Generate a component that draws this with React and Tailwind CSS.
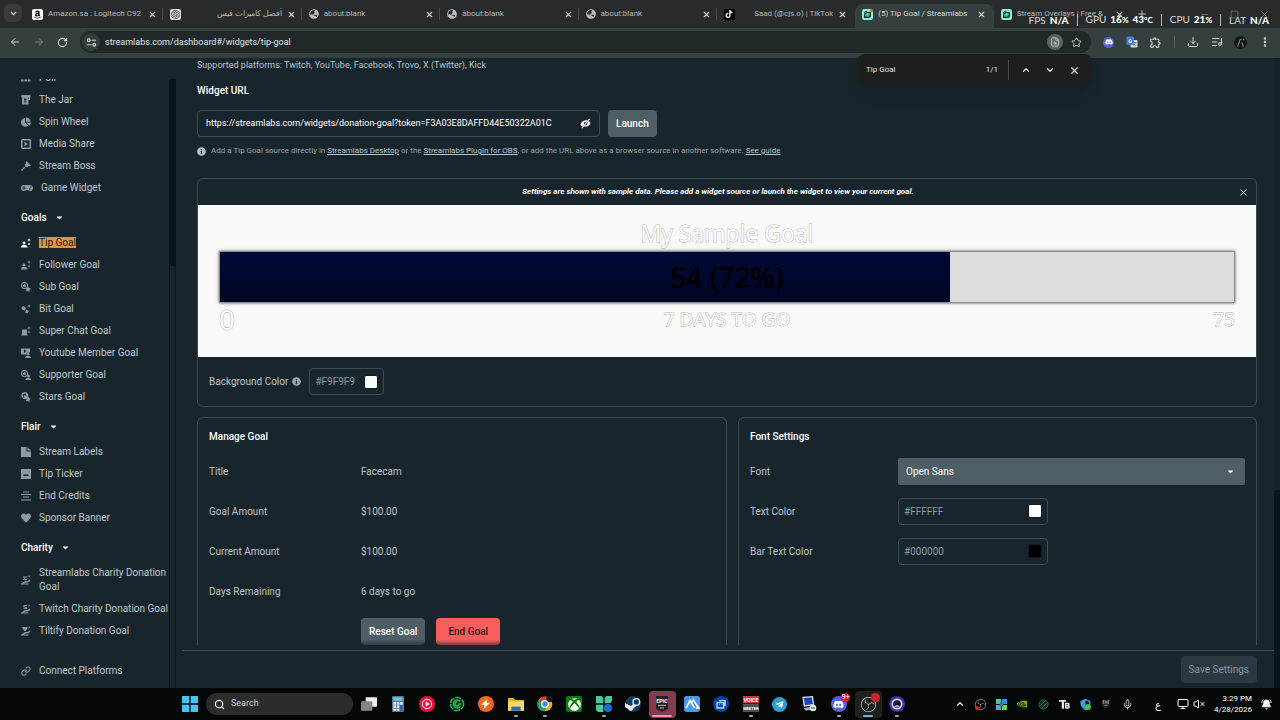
import React, { useState } from 'react';
import {
  ArrowLeft, ArrowRight, RotateCw, ChevronDown, ChevronUp, X, Plus, Minus, Square, Star,
  Download, ListMusic, EllipsisVertical, Search, Link, Mic, VolumeX, BellRing, FileSearch, Monitor
} from 'lucide-react';
import {
  FaAmazon, FaXbox, FaDiscord, FaTiktok, FaGlobeAsia, FaChartPie, FaHeart,
  FaGamepad, FaInfoCircle, FaTelegramPlane, FaCaretDown, FaShieldAlt
} from 'react-icons/fa';
import { MdOutlineExtension } from 'react-icons/md';
import { SiOpenai, SiObsstudio, SiNvidia } from 'react-icons/si';

const StreamlabsLogo = () => (
  <svg viewBox="0 0 24 24" className="size-[11px] shrink-0" aria-hidden="true">
    <rect width="24" height="24" rx="5" fill="#80f5d2" />
    <path d="M6 13a5 5 0 0 1 5-5h7v6a4 4 0 0 1-4 4H6z" fill="none" stroke="#15292b" strokeWidth="3" />
    <path d="M11 13v1M15 13v1M5 8c1-2 3-3 6-3" stroke="#15292b" strokeWidth="2" strokeLinecap="round" fill="none" />
  </svg>
);

const Globe = () => <FaGlobeAsia className="size-[10px] shrink-0 text-[#b9bdbe]" />;

const tabs = [
  {
    title: 'Amazon.sa : Logitech C92',
    icon: (
      <span className="flex size-[11px] shrink-0 items-center justify-center rounded-xs bg-white text-black">
        <FaAmazon className="size-[9px]" />
      </span>
    )
  },
  {
    title: 'أفضل كاميرات فيس',
    right: true,
    icon: (
      <span className="flex size-[11px] shrink-0 items-center justify-center rounded-xs bg-[#d9dcdc] text-[#333]">
        <SiOpenai className="size-[9px]" />
      </span>
    )
  },
  { title: 'about:blank', icon: <Globe /> },
  { title: 'about:blank', icon: <Globe /> },
  { title: 'about:blank', icon: <Globe /> },
  {
    title: 'Saad (@cjs.o) | TikTok',
    right: true,
    icon: (
      <span className="flex size-[11px] shrink-0 items-center justify-center bg-black text-white">
        <FaTiktok className="size-[8px]" />
      </span>
    )
  },
  { title: '(5) Tip Goal / Streamlabs', active: true, alert: true, icon: <StreamlabsLogo /> },
  { title: 'Stream Overlays | Free &', icon: <StreamlabsLogo /> }
];

const stats = [
  { label: 'FPS', values: [['N/A', '']] },
  { label: 'GPU', values: [['16', '%'], ['43', '°C']] },
  { label: 'CPU', values: [['21', '%']] },
  { label: 'LAT', values: [['N/A', '']] }
];

const TabStrip = () => (
  <div className="relative flex h-7 shrink-0 bg-[#282b2c] pl-1">
    <button aria-label="Search tabs" className="mt-1 mr-[3px] flex size-[18px] shrink-0 items-center justify-center rounded-md bg-[#373b3b] text-white">
      <ChevronDown size={9} strokeWidth={3} />
    </button>
    <div className="flex min-w-0 flex-1 items-end">
      {tabs.map((tab, i) => (
        <div
          key={i}
          className={`flex h-6 min-w-0 flex-1 items-center gap-[5px] pr-2 pb-1 pl-[7px] ${
            tab.active ? 'rounded-t-lg bg-[#343f3f] text-[#d5dbdb]' : 'text-[#b3b8b9]'
          }`}
        >
          <span className="relative shrink-0">
            {tab.icon}
            {tab.alert && <span className="absolute top-0 right-0 size-[3px] rounded-full bg-[#f0484e]" />}
          </span>
          <span
            dir={tab.right ? 'auto' : 'ltr'}
            className={`min-w-0 flex-1 overflow-hidden text-[8px] leading-3 whitespace-nowrap ${tab.right ? 'text-right' : ''}`}
          >
            {tab.title}
          </span>
          <button aria-label="Close tab" className="shrink-0 text-[#d5d9d9]">
            <X size={9} strokeWidth={3} />
          </button>
          {!tab.active && i < 5 && <span className="-mr-2 h-3 w-px bg-[#474d4e]" />}
        </div>
      ))}
    </div>
    <div className="flex w-[148px] shrink-0 items-center text-[#6f7576]">
      <button aria-label="New tab" className="ml-1 text-[#b3b8b9]"><Plus size={12} /></button>
      <div className="flex flex-1 justify-end gap-5 pr-[10px]">
        <button aria-label="Minimize"><Minus size={11} /></button>
        <button aria-label="Restore"><Square size={9} /></button>
        <button aria-label="Close"><X size={11} /></button>
      </div>
    </div>

    {/* Hardware stats overlay */}
    <div className="absolute top-[11px] right-[11px] flex items-center gap-2 text-[10px] leading-4 whitespace-nowrap text-[#d9dcdc] [font-family:Lato,sans-serif]">
      {stats.map((s, i) => (
        <React.Fragment key={s.label}>
          {i > 0 && <span className="h-3 w-px bg-[#aeb3b3]" />}
          <span className="flex gap-1">
            {s.label}
            {s.values.map(([value, unit]) => (
              <b key={value} className="font-black text-white">
                {value}
                {unit && <span className="text-[8px]">{unit}</span>}
              </b>
            ))}
          </span>
        </React.Fragment>
      ))}
    </div>
  </div>
);

const SiteSettings = () => (
  <svg viewBox="0 0 24 24" className="size-[11px]" fill="none" stroke="currentColor" strokeWidth="2.5" aria-hidden="true">
    <circle cx="6" cy="7" r="3" />
    <path d="M12 7h10M2 17h10" />
    <circle cx="18" cy="17" r="3" />
  </svg>
);

const Translate = () => (
  <svg viewBox="0 0 24 24" className="size-[12px]" aria-hidden="true">
    <rect x="9" y="8" width="14" height="15" rx="2" fill="#d4d9dd" />
    <rect x="1" y="1" width="15" height="17" rx="2" fill="#4c80d8" />
    <path d="M11 8a3 3 0 1 0 1 3H9" stroke="#fff" strokeWidth="2" fill="none" />
    <path d="M15 13h6M18 12v1c0 3-2 5-4 6M16 16l4 4" stroke="#5a6e84" strokeWidth="1.5" fill="none" />
  </svg>
);

const Toolbar = () => (
  <div className="flex h-[30px] shrink-0 items-center bg-[#343f3f] pb-0.5 text-[#cdd3d3]">
    <div className="flex w-20 shrink-0 items-center gap-3 pl-[9px]">
      <button aria-label="Back"><ArrowLeft size={12} /></button>
      <button aria-label="Forward" className="text-[#7a8484]"><ArrowRight size={12} /></button>
      <button aria-label="Reload"><RotateCw size={11} strokeWidth={2.5} /></button>
    </div>
    <div className="flex h-[22px] flex-1 items-center rounded-full bg-[#202829] pr-[9px] pl-0.5">
      <button aria-label="Site information" className="flex size-[18px] items-center justify-center rounded-full bg-[#343c3d]">
        <SiteSettings />
      </button>
      <input
        aria-label="Address"
        defaultValue="streamlabs.com/dashboard#/widgets/tip-goal"
        className="ml-[5px] min-w-0 flex-1 bg-transparent text-[9px] leading-4 text-[#dfe4e4] outline-none"
      />
      <button aria-label="Find in page" className="flex size-4 items-center justify-center rounded-full bg-[#5c6464]">
        <FileSearch size={10} />
      </button>
      <button aria-label="Bookmark" className="ml-2"><Star size={11} /></button>
    </div>
    <div className="flex w-[189px] shrink-0 items-center justify-between pr-[9px] pl-3">
      <button aria-label="Discord" className="flex size-[11px] items-center justify-center rounded-full bg-[#5a5fe0] text-white">
        <FaDiscord size={8} />
      </button>
      <button aria-label="Translate"><Translate /></button>
      <button aria-label="Extensions"><MdOutlineExtension size={13} /></button>
      <span className="h-3 w-px bg-[#56605f]" />
      <button aria-label="Downloads"><Download size={12} /></button>
      <button aria-label="Media"><ListMusic size={12} /></button>
      <button aria-label="Profile">
        <svg viewBox="0 0 24 24" className="size-[13px]" aria-hidden="true">
          <circle cx="12" cy="12" r="12" fill="#141718" />
          <path d="M7 20c0-5 2-6 3-9 0-3 2-5 4-5M14 12c2 2 3 4 3 8M17 5l2 3" stroke="#7d8585" strokeWidth="2" fill="none" />
        </svg>
      </button>
      <button aria-label="Menu"><EllipsisVertical size={12} strokeWidth={3} /></button>
    </div>
  </div>
);

const FindBar = () => (
  <div className="absolute top-[54px] right-[188px] flex h-8 w-[235px] items-center rounded-lg bg-[#1d1f1f] pr-3 pl-[9px] text-[8px] text-[#dfe2e2] shadow-lg">
    <input aria-label="Find" defaultValue="Tip Goal" className="min-w-0 flex-1 bg-transparent outline-none" />
    <span>1/1</span>
    <span className="mr-3 ml-[10px] h-5 w-px bg-[#4a4d4d]" />
    <button aria-label="Previous"><ChevronUp size={10} strokeWidth={3} /></button>
    <button aria-label="Next" className="ml-[14px]"><ChevronDown size={10} strokeWidth={3} /></button>
    <button aria-label="Close find bar" className="ml-[14px]"><X size={11} strokeWidth={2.5} /></button>
  </div>
);

const Glyph = ({ children }) => (
  <svg viewBox="0 0 20 20" className="size-[10px] shrink-0" fill="currentColor" aria-hidden="true">{children}</svg>
);

const person = <path d="M6 7a3 3 0 1 1 0 6 3 3 0 0 1 0-6zM0 19c0-4 2-5 6-5s7 1 7 5z" />;
const sparkle = <path d="M16 0l1 3 3 1-3 1-1 3-1-3-3-1 3-1zM16 9l1 2 2 1-2 1-1 2-1-2-2-1 2-1z" />;
const hand = <path d="M1 17h5l3-2h5l5-4-1-2-5 3H8M0 19h15v-2H0z" />;
const coin = <path fillRule="evenodd" d="M7 0a7 7 0 1 1 0 14A7 7 0 0 1 7 0zm0 2a5 5 0 1 0 0 10A5 5 0 0 0 7 2zm0 2a3 3 0 1 1 0 6 3 3 0 0 1 0-6z" />;

const widgets = [
  { name: 'Poll', icon: <Glyph><path d="M0 13h5v4H0zM7 13h5v4H7zM14 13h5v4h-5z" /></Glyph> },
  { name: 'The Jar', icon: <Glyph><path fillRule="evenodd" d="M1 0h18v4h-1v6h-3v9H2V4H1zM6 7v4h5V7zm0 6v2h5v-2zm9-8v3h1V5z" /></Glyph> },
  { name: 'Spin Wheel', icon: <FaChartPie className="size-[10px] shrink-0" /> },
  { name: 'Media Share', icon: <Glyph><path fillRule="evenodd" d="M2 0h16l2 2v16l-2 2H2l-2-2V2zm1 3v14h14V3zm4 2l7 5-7 5z" /></Glyph> },
  { name: 'Stream Boss', icon: <Glyph><path d="M11 0l9 9-3 2-2-1-3 3-2-2-8 9-2-2 9-8-2-2 3-3-1-2z" /></Glyph> },
  { name: 'Game Widget', icon: <FaGamepad className="size-[12px] shrink-0" /> }
];

const goals = [
  { name: 'Tip Goal', active: true, icon: <Glyph>{person}{sparkle}</Glyph> },
  { name: 'Follower Goal', icon: <Glyph>{person}{sparkle}</Glyph> },
  { name: 'Sub Goal', icon: <Glyph>{coin}<path d="M14 9l2 3 4 1-3 3v4l-4-2-3 1 1-4-2-3 4-1z" /></Glyph> },
  { name: 'Bit Goal', icon: <Glyph><path d="M5 4l5 4-2 5-6-2-1-4zM11 11l5 3-3 5-5-2z" /><path d="M16 0l1 3 3 1-3 1-1 3-1-3-3-1 3-1z" /></Glyph> },
  { name: 'Super Chat Goal', icon: <Glyph><path d="M2 7h10v10l2 2H0l2-3z" />{sparkle}</Glyph> },
  { name: 'Youtube Member Goal', icon: <Glyph><path fillRule="evenodd" d="M0 1h18v8h-6l-2 4H0zm6 2v7l5-4zM14 9a3 3 0 1 1 0 6 3 3 0 0 1 0-6zM8 20c0-3 2-4 6-4s6 1 6 4z" /></Glyph> },
  { name: 'Supporter Goal', icon: <Glyph>{coin}<path d="M15 9a3 3 0 1 1 0 6 3 3 0 0 1 0-6zM9 20c0-3 2-4 6-4s5 1 5 4z" /></Glyph> },
  { name: 'Stars Goal', icon: <Glyph><path fillRule="evenodd" d="M7 0a7 7 0 1 1-3 13A7 7 0 0 1 7 0zm1 3L4 5v6h2V7h4V3z" /><path d="M14 9l2 3 4 1-3 3v4l-4-2-3 1 1-4-2-3 4-1z" /></Glyph> }
];

const flair = [
  { name: 'Stream Labels', icon: <Glyph><path d="M0 0h11v9h9v11H0zM13 0l7 7h-7z" /></Glyph> },
  { name: 'Tip Ticker', icon: <Glyph><path fillRule="evenodd" d="M0 0h20v20H0zM5 11v3h10v-3z" /></Glyph> },
  { name: 'End Credits', icon: <Glyph><path d="M4 1h12v2H4zM0 6h20v2H0zM4 11h12v2H4zM0 17h20v2H0z" /></Glyph> },
  { name: 'Sponsor Banner', icon: <FaHeart className="size-[10px] shrink-0" /> }
];

const charity = [
  { name: 'Streamlabs Charity Donation Goal', icon: <Glyph>{hand}<path d="M4 3h9v2H9L7 8h5v2H4l3-5H4zM15 1l4 1-4 3z" /></Glyph> },
  { name: 'Twitch Charity Donation Goal', icon: <Glyph>{hand}<path d="M5 2h7v2H7v2h5v4H5V8h4V7H5zM15 1l4 1-4 3z" /></Glyph> },
  { name: 'Tiltify Donation Goal', icon: <Glyph>{hand}<path d="M3 2h10v3l-4 5h-2L3 5zM15 1l4 1-4 3z" /></Glyph> }
];

const NavItem = ({ item }) => (
  <li>
    <a
      href={`#${item.name}`}
      className={`flex items-center gap-2 py-1 leading-[14px] ${item.active ? 'text-white' : 'text-[#8f9a9f]'}`}
    >
      {item.icon}
      <span className="text-[#bfc9ce]">
        {item.active ? <mark className="bg-[#e8913a] text-[#1c1c1c]">{item.name}</mark> : item.name}
      </span>
    </a>
  </li>
);

const NavGroup = ({ title, items }) => (
  <>
    <button className="mt-[7px] mb-1 flex h-[22px] items-center gap-2 font-medium text-white">
      {title}
      <FaCaretDown size={9} />
    </button>
    <ul>{items.map((item) => <NavItem key={item.name} item={item} />)}</ul>
  </>
);

const Sidebar = () => (
  <aside className="flex w-[182px] shrink-0 pt-[21px] text-[10px]">
    <nav className="w-[169px] overflow-hidden pl-[21px]">
      <ul className="-mt-3">{widgets.map((item) => <NavItem key={item.name} item={item} />)}</ul>
      <NavGroup title="Goals" items={goals} />
      <NavGroup title="Flair" items={flair} />
      <NavGroup title="Charity" items={charity} />
      <ul className="mt-[18px]">
        <NavItem item={{ name: 'Connect Platforms', icon: <Link size={10} strokeWidth={2.5} className="shrink-0" /> }} />
      </ul>
    </nav>
    <div className="w-[7px] bg-[#09161c] pt-[187px]">
      <div className="mx-px h-full bg-[#15232a]" />
    </div>
  </aside>
);

const ColorField = ({ id, value, wide }) => {
  const [color, setColor] = useState(value);
  return (
    <div className={`flex h-[27px] items-center rounded-sm border border-[#3c4c53] px-[5px] ${wide ? 'w-[150px]' : 'w-[75px]'}`}>
      <input
        id={id}
        value={color}
        onChange={(e) => setColor(e.target.value)}
        className="min-w-0 flex-1 bg-transparent text-[#8f9ba0] outline-none"
      />
      <button aria-label="Pick color" className="size-[14px] rounded-xs border border-[#111c21]" style={{ backgroundColor: color }} />
    </div>
  );
};

const GoalPreview = () => {
  const current = 54;
  const target = 75;
  const percent = Math.round((current / target) * 100);
  return (
    <div className="h-[152px] bg-[#f9f9f9] px-[21px] pt-3 text-white [font-family:'Open_Sans',sans-serif] [-webkit-text-stroke:1px_#b4b4b4] [paint-order:stroke_fill]">
      <div className="text-center text-[23px] leading-8">My Sample Goal</div>
      <div className="mt-0.5 grid h-[52px] border border-[#8e8e8e] bg-[#ddd] shadow-[0_0_3px_#555]">
        <div
          className="col-start-1 row-start-1 bg-linear-to-b from-[#000936] to-[#000622]"
          style={{ width: `${percent}%` }}
        />
        <div className="col-start-1 row-start-1 self-center text-center text-[28px] leading-8 font-semibold text-black [-webkit-text-stroke:0]">
          {current} ({percent}%)
        </div>
      </div>
      <div className="flex items-center justify-between leading-8">
        <span className="w-10 text-[28px]">0</span>
        <span className="text-[19px]">7 DAYS TO GO</span>
        <span className="w-10 text-right text-[19px]">{target}</span>
      </div>
    </div>
  );
};

const goalRows = [
  ['Title', 'Facecam'],
  ['Goal Amount', '$100.00'],
  ['Current Amount', '$100.00'],
  ['Days Remaining', '6 days to go']
];

const Settings = () => (
  <main className="flex min-w-0 flex-1 flex-col text-[10px] text-[#b9c4c9]">
    <div className="flex min-h-0 flex-1 flex-col overflow-hidden pr-[17px] pl-[15px]">
      <p className="text-[9px] leading-[14px]">Supported platforms: Twitch, YouTube, Facebook, Trovo, X (Twitter), Kick</p>
      <label htmlFor="widget-url" className="mt-3 leading-[14px] font-medium text-white">Widget URL</label>
      <div className="mt-3 flex shrink-0 gap-2">
        <div className="flex h-[27px] w-[403px] items-center rounded-sm border border-[#3c4c53] px-2">
          <input
            id="widget-url"
            readOnly
            value="https://streamlabs.com/widgets/donation-goal?token=F3A03E8DAFFD44E50322A01C"
            className="min-w-0 flex-1 bg-transparent text-[9px] text-white outline-none"
          />
          <button aria-label="Hide URL" className="ml-3 text-white">
            <svg viewBox="0 0 24 24" className="size-[11px]" aria-hidden="true">
              <path d="M1 14C4 6 10 4 16 5l-3 4c-4-1-6 3-4 5l-4 4c-2-1-3-2-4-4zM19 7c2 1 3 2 4 4-3 7-8 9-14 8l3-3c4 0 5-3 4-5z" fill="currentColor" />
              <path d="M4 22L21 2" stroke="currentColor" strokeWidth="2.5" />
            </svg>
          </button>
        </div>
        <button className="h-[27px] rounded-sm bg-[#4f5e65] px-2 font-medium text-white">Launch</button>
      </div>
      <p className="mt-2 flex shrink-0 items-center gap-[5px] text-[8px] leading-3 text-[#98a4a9]">
        <FaInfoCircle size={9} className="text-[#b9c4c9]" />
        <span>
          Add a Tip Goal source directly in <a href="#desktop" className="text-[#b9c4c9] underline">Streamlabs Desktop</a> or
          the <a href="#obs" className="text-[#b9c4c9] underline">Streamlabs Plugin for OBS</a>, or add the URL above as a
          browser source in another software. <a href="#guide" className="text-[#b9c4c9] underline">See guide</a>
        </span>
      </p>

      {/* Preview */}
      <section className="mt-[21px] shrink-0 overflow-hidden rounded-md border border-[#3c4c53]">
        <div className="flex h-[26px] items-center pr-[7px] text-white">
          <p className="flex-1 text-center text-[8px] font-bold italic">
            Settings are shown with sample data. Please add a widget source or launch the widget to view your current goal.
          </p>
          <button aria-label="Dismiss"><X size={11} strokeWidth={2} /></button>
        </div>
        <GoalPreview />
        <div className="flex h-[49px] items-center pl-[11px]">
          <label htmlFor="background-color">Background Color</label>
          <FaInfoCircle size={9} className="mr-2 ml-1 text-[#98a4a9]" />
          <ColorField id="background-color" value="#F9F9F9" />
        </div>
      </section>

      <div className="mt-[10px] mb-[6px] grid flex-1 grid-cols-[530fr_519fr] gap-[11px]">
        <section className="rounded-t-md border border-b-0 border-[#3c4c53] px-[11px] pt-3">
          <h2 className="leading-[14px] font-medium text-white">Manage Goal</h2>
          <dl className="mt-[7px]">
            {goalRows.map(([name, value]) => (
              <div key={name} className="flex h-10 items-center">
                <dt className="w-[152px]">{name}</dt>
                <dd>{value}</dd>
              </div>
            ))}
          </dl>
          <div className="mt-[7px] flex gap-[11px] pl-[152px] font-medium">
            <button className="h-[27px] rounded-sm bg-linear-to-b from-[#4f5e65] from-80% to-[#2c3a41] px-2 text-white">Reset Goal</button>
            <button className="h-[27px] rounded-sm bg-linear-to-b from-[#f85e5c] from-80% to-[#7d3c40] px-3 text-[#1b1b1b]">End Goal</button>
          </div>
        </section>

        <section className="rounded-t-md border border-b-0 border-[#3c4c53] px-[11px] pt-3">
          <h2 className="leading-[14px] font-medium text-white">Font Settings</h2>
          <div className="mt-[7px] flex h-10 items-center">
            <label htmlFor="font" className="w-[148px] shrink-0">Font</label>
            <div className="relative flex-1">
              <select id="font" className="h-[27px] w-full appearance-none rounded-xs bg-[#4f5e65] px-2 text-white outline-none">
                <option>Open Sans</option>
                <option>Roboto</option>
              </select>
              <FaCaretDown size={9} className="pointer-events-none absolute top-[9px] right-[10px] text-white" />
            </div>
          </div>
          <div className="flex h-10 items-center">
            <label htmlFor="text-color" className="w-[148px]">Text Color</label>
            <ColorField id="text-color" value="#FFFFFF" wide />
          </div>
          <div className="flex h-10 items-center">
            <label htmlFor="bar-text-color" className="w-[148px]">Bar Text Color</label>
            <ColorField id="bar-text-color" value="#000000" wide />
          </div>
        </section>
      </div>
    </div>
    <div className="flex h-[38px] shrink-0 items-center justify-end border-t border-[#3c4c53] pr-[17px]">
      <button className="h-[27px] rounded-sm bg-[#2b383f] px-2 text-[#8a969b]">Save Settings</button>
    </div>
  </main>
);

const Svg = ({ children }) => (
  <svg viewBox="0 0 24 24" className="size-4" aria-hidden="true">{children}</svg>
);

const apps = [
  { name: 'Task view', icon: <Svg><rect x="7" y="2" width="17" height="14" rx="1" fill="#eee" /><rect x="0" y="8" width="17" height="14" rx="1" fill="#858585" /></Svg> },
  { name: 'Calculator', icon: <Svg><rect x="3" y="0" width="18" height="24" rx="2" fill="#5f7890" /><path d="M5 2h14v5H5z" fill="#63c8ee" /><path d="M5 9h4v4H5zM10 9h4v4h-4zM15 9h4v4h-4zM5 14h4v4H5zM10 14h4v4h-4zM5 19h4v3H5zM10 19h4v3h-4z" fill="#dbe7ef" /><path d="M15 14h4v8h-4z" fill="#2d62a8" /></Svg> },
  { name: 'Music', icon: <Svg><circle cx="12" cy="12" r="12" fill="#e8113e" /><circle cx="12" cy="12" r="7" stroke="#fff" strokeWidth="1.5" fill="none" /><path d="M10 8l6 4-6 4z" fill="#fff" /></Svg> },
  { name: 'Phone Link', icon: <Svg><circle cx="12" cy="12" r="10" fill="#0d2c18" stroke="#28bd5d" strokeWidth="2" strokeDasharray="9 2" /><path d="M17 8a6 6 0 1 0 0 8M12 9a3 3 0 1 0 3 3h3" stroke="#28bd5d" strokeWidth="2" fill="none" /></Svg> },
  { name: 'Streaming', icon: <Svg><circle cx="12" cy="12" r="12" fill="#f1661d" /><path d="M14 4L5 13h5l-2 7 10-10h-5z" fill="#fff" /></Svg> },
  { name: 'File Explorer', open: true, icon: <Svg><path d="M0 3h8l3 3h13v16H0z" fill="#e6ab2d" /><path d="M0 8h24v14H0z" fill="#fbd768" /><path d="M5 16h14v6H5z" fill="#2270b5" /></Svg> },
  { name: 'Chrome', open: true, icon: <Svg><circle cx="12" cy="12" r="11" fill="#e8ae20" /><path d="M12 12L2 7a11 11 0 0 1 20 0z" fill="#db4437" /><path d="M12 12L2 6a11 11 0 0 0 9 17l5-8z" fill="#2c9d58" /><circle cx="12" cy="12" r="5" fill="#4285f4" stroke="#fff" strokeWidth="2" /><circle cx="19" cy="4" r="5" fill="#171717" /></Svg> },
  { name: 'Xbox', icon: <span className="flex size-4 items-center justify-center rounded-xs bg-[#107c10] text-white"><FaXbox size={13} /></span> },
  { name: 'Clover', open: true, icon: <Svg><path d="M0 0h8l3 3v8H0zM13 3l3-3h8v8l-3 3h-8zM0 13h11v11H3l-3-3z" fill="#4cc6a0" /><circle cx="18" cy="18" r="6" fill="#1673d1" /></Svg> },
  { name: 'Steam', icon: <Svg><circle cx="12" cy="12" r="12" fill="#123b63" /><path d="M0 11l9 4 5-5 4 4-6 5c-1 4-6 4-7 0l-5-2z" fill="#eaf0f4" /><circle cx="17" cy="9" r="5" fill="#123b63" stroke="#eaf0f4" strokeWidth="2" /></Svg> },
  { name: 'Epic Games', open: true, box: 'bg-[#843a51]', bar: 'w-5 bg-[#ff8fae]', icon: <Svg><path d="M3 0h18v19l-9 5-9-5z" fill="#222" /><text x="12" y="11" textAnchor="middle" fontSize="8" fontWeight="700" fill="#fff">EPIC</text><path d="M6 14h12M9 18h6" stroke="#bbb" strokeWidth="1.5" /></Svg> },
  { name: 'Mountains', icon: <Svg><rect width="24" height="24" rx="4" fill="#4a97e8" /><path d="M3 18L9 7l7 11M11 10l3-4 8 12h-4" fill="none" stroke="#fff" strokeWidth="2.5" /></Svg> },
  { name: 'Robot', icon: <Svg><circle cx="12" cy="12" r="12" fill="#0b41a8" /><path d="M6 10h10v8H6zM9 7h9v8M9 13h1M13 13h1" stroke="#a7dcff" strokeWidth="2" fill="none" /></Svg> },
  { name: 'Voicemeeter', open: true, icon: <Svg><path d="M0 0h24v11H0z" fill="#d1343b" /><path d="M0 12h24v12H0z" fill="#4a5157" /><text x="12" y="9" textAnchor="middle" fontSize="8" fontWeight="700" fill="#fff">VOICE</text><text x="12" y="21" textAnchor="middle" fontSize="6" fontWeight="700" fill="#fff">MEETER</text></Svg> },
  { name: 'Telegram', icon: <span className="flex size-[15px] items-center justify-center rounded-full bg-[#2c9fd3] text-white"><FaTelegramPlane size={9} /></span> },
  { name: 'Remote desktop', icon: <Svg><path d="M2 1l16-1 2 14-16 2z" fill="#d8dee6" /><path d="M4 3l12-1 2 10-12 2z" fill="#1b45bc" /><path d="M4 18l13-2 4 3-14 3z" fill="#aab3bc" /><circle cx="18" cy="18" r="5" fill="#e6ece8" /><path d="M15 18h6" stroke="#3d8c58" strokeWidth="2" /></Svg> },
  { name: 'Discord', open: true, badge: '9+', icon: <span className="flex size-4 items-center justify-center rounded-full bg-[#5661dc] text-white"><FaDiscord size={11} /></span> },
  { name: 'OBS Studio', open: true, box: 'bg-[#20201f]', bar: 'w-[10px] bg-[#67b8dd]', badge: ' ', icon: <SiObsstudio size={15} className="text-[#c9c9c9]" /> },
  { name: 'Recorder', open: true, icon: <Svg><circle cx="12" cy="12" r="12" fill="#4130a9" /><circle cx="12" cy="12" r="7" fill="#0c0b2e" stroke="#d7d6ff" strokeWidth="2.5" /><path d="M8 16c1-3 7-3 8 0" fill="#d7d6ff" /></Svg> }
];

const tray = [
  { name: 'OBS', icon: <span className="relative"><SiObsstudio size={11} className="text-[#bbb]" /><span className="absolute bottom-0 left-0 size-1 rounded-full bg-[#f01818]" /></span> },
  { name: 'Clover', icon: <svg viewBox="0 0 24 24" className="size-[11px]"><path d="M0 0h11v11H0z" fill="#4fc7a5" /><path d="M13 0h11v11H13z" fill="#3c8fe0" /><path d="M0 13h11v11H0z" fill="#47b3c6" /><path d="M13 13h11v11H13z" fill="#72d34c" /><path d="M8 8h8v8H8z" fill="#267b9b" /></svg> },
  { name: 'NVIDIA', icon: <SiNvidia size={10} className="text-[#76b900]" /> },
  { name: 'Monitor', icon: <svg viewBox="0 0 24 24" className="size-[11px]"><circle cx="12" cy="12" r="10" fill="#12302e" stroke="#2b6e65" strokeWidth="2" /><path d="M5 15l10-10M9 19L19 9" stroke="#2b6e65" strokeWidth="2" /></svg> },
  { name: 'Bitsum', icon: <svg viewBox="0 0 24 24" className="size-[11px]"><path d="M0 2h15v4h-4v15H6V6H0zM13 8h6c5 0 5 5 3 6 3 2 2 7-3 7h-6z" fill="#e4e4e4" /><path d="M16 12h3M16 17h3" stroke="#111" strokeWidth="2" /></svg> },
  { name: 'Security', icon: <span className="relative"><FaShieldAlt size={11} className="text-[#2fa4e7]" /><span className="absolute right-0 bottom-0 size-[6px] rounded-full bg-[#45c34f]" /></span> },
  { name: 'Epic', icon: <svg viewBox="0 0 24 24" className="size-[10px]"><path d="M3 1h18v17l-9 5-9-5z" fill="#222" /><path d="M5 4h3M5 7h3M5 10h3M5 4v7M11 4v7M14 4v7M17 4h3M17 10h3M17 4v7M8 15h8" stroke="#ccc" strokeWidth="1.5" /></svg> },
  { name: 'Microphone', icon: <Mic size={11} className="text-[#c5d5dc]" /> }
];

const Taskbar = () => (
  <footer className="flex h-8 shrink-0 items-center bg-[#050606] pl-[182px] text-white">
    <button aria-label="Start">
      <Svg>
        <path d="M0 0h11v11H0zM13 0h11v11H13zM0 13h11v11H0zM13 13h11v11H13z" fill="#45c3f5" />
      </Svg>
    </button>
    <label className="ml-2 flex h-[22px] w-[147px] items-center gap-[6px] rounded-full bg-[#2c2c2c] px-2">
      <Search size={11} strokeWidth={2.5} className="shrink-0" />
      <input aria-label="Search" placeholder="Search" className="w-full bg-transparent text-[9px] placeholder:text-[#cfcfcf] outline-none" />
    </label>
    <div className="ml-px flex w-[558px] shrink-0">
      {apps.map((app) => (
        <button key={app.name} aria-label={app.name} className="relative flex h-8 flex-1 items-center justify-center">
          <span className={`relative flex size-[27px] items-center justify-center rounded-sm ${app.box || ''}`}>
            {app.icon}
            {app.badge && (
              <span className="absolute top-[2px] right-[2px] flex h-[9px] min-w-[9px] items-center justify-center rounded-full bg-[#d51f2a] text-[7px] leading-none">
                {app.badge}
              </span>
            )}
          </span>
          {app.open && <span className={`absolute bottom-[3px] h-0.5 rounded-full ${app.bar || 'w-1 bg-[#a5a5a5]'}`} />}
        </button>
      ))}
    </div>
    <div className="ml-auto flex shrink-0 items-center pr-2">
      <button aria-label="Show hidden icons" className="mr-[10px]"><ChevronUp size={10} strokeWidth={3} /></button>
      {tray.map((t) => (
        <button key={t.name} aria-label={t.name} className="flex w-[21px] justify-center pr-[10px]">
          <span className="flex shrink-0">{t.icon}</span>
        </button>
      ))}
      <button aria-label="Input language" className="w-[30px] text-[10px] [font-family:'DejaVu_Sans',sans-serif]">ع</button>
      <button aria-label="Network" className="mr-1 ml-1"><Monitor size={12} /></button>
      <button aria-label="Volume"><VolumeX size={12} /></button>
      <div className="ml-[9px] text-right text-[8px] leading-[11px]">
        <div>3:29 PM</div>
        <div>4/28/2026</div>
      </div>
      <button aria-label="Notifications" className="ml-[9px]"><BellRing size={11} fill="currentColor" /></button>
    </div>
  </footer>
);

export default function App() {
  return (
    <div className="relative flex h-screen flex-col overflow-hidden bg-[#19252c] [font-family:Roboto,'Noto_Sans',sans-serif]">
      <TabStrip />
      <Toolbar />
      <div className="flex min-h-0 flex-1">
        <Sidebar />
        <Settings />
        {/* Page scrollbar */}
        <div className="w-[6px] shrink-0 bg-[#09161c]">
          <div className="h-[432px] bg-[#15232a]" />
        </div>
      </div>
      <Taskbar />
      <FindBar />
    </div>
  );
}
